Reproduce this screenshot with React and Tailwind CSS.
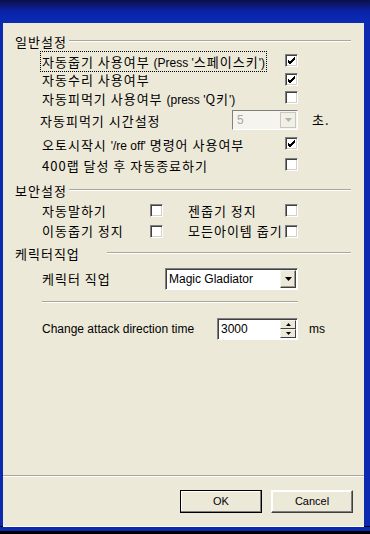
import React from 'react';

const kr = { fontFamily: '"Noto Sans CJK KR", "Noto Sans", sans-serif' };
const lat = { fontFamily: '"Liberation Sans", Arial, sans-serif' };

// korean label text, a bit wider to match the bitmap Gulim of the original
const krText = 'text-[13px] tracking-[1px] text-black whitespace-nowrap';

function L({ children }) {
    return <span style={lat} className="text-[12px] tracking-normal">{children}</span>;
}

function CheckBox({ checked }) {
    return (
        <div className="w-[13px] h-[13px] bg-white border border-t-[#808080] border-l-[#808080] border-r-white border-b-white shadow-[inset_1px_1px_0_#404040,inset_-1px_-1px_0_#d4d0c8] flex items-center justify-center shrink-0">
            {checked && (
                <svg width="9" height="9" viewBox="0 0 9 9">
                    <path d="M1 4 L3 6 L8 1 M1 5 L3 7 L8 2 M1 6 L3 8 L8 3" stroke="#000" strokeWidth="1" fill="none" />
                </svg>
            )}
        </div>
    );
}

function Arrow({ color = '#000' }) {
    return (
        <svg width="7" height="4" viewBox="0 0 7 4">
            <path d="M0 0 H7 L3.5 4 Z" fill={color} />
        </svg>
    );
}

function GroupHeader({ title, lineStart }) {
    return (
        <div className="flex items-center h-[20px] pl-[12px] pr-[13px]">
            <span style={kr} className={`${krText} leading-none`}>{title}</span>
            <div className={`flex-1 h-[2px] border-t border-t-[#aca899] border-b border-b-white ${lineStart}`} />
        </div>
    );
}

function Row({ height, children }) {
    return <div className="flex items-center" style={{ height }}>{children}</div>;
}

function OptionRow({ height, children, checked, focused }) {
    return (
        <Row height={height}>
            <div className="w-[243px] pl-[38px]">
                <span style={kr} className={`${krText} leading-[14px] px-[1px] ${focused ? 'outline outline-1 outline-dotted outline-black' : ''}`}>
                    {children}
                </span>
            </div>
            <div className="pl-[39px]">
                <CheckBox checked={checked} />
            </div>
        </Row>
    );
}

function RaisedButton({ label, isDefault }) {
    return (
        <button
            style={lat}
            className={`w-[82px] h-[23px] bg-[#ece9d8] text-[11px] text-black border ${isDefault ? 'border-black' : 'border-t-white border-l-white border-r-[#404040] border-b-[#404040]'} shadow-[inset_-1px_-1px_0_#808080,inset_1px_1px_0_#ffffff]`}
        >
            {label}
        </button>
    );
}

function ScrollBtn() {
    return (
        <div className="w-[16px] self-stretch bg-[#ece9d8] border border-t-[#f4f4f0] border-l-[#f4f4f0] border-r-[#404040] border-b-[#404040] shadow-[inset_-1px_-1px_0_#9c9a8e] flex items-center justify-center">
            <Arrow />
        </div>
    );
}

export default function App() {
    return (
        <div className="w-[370px] h-[534px] bg-black flex flex-col">
            {/* title bar */}
            <div className="h-[23px] shrink-0 bg-gradient-to-b from-[#0a0f4a] via-[#0a23a8] to-[#0a2bb5]" />

            <div className="flex flex-1 min-h-0">
                <div className="w-[3px] bg-[#0b2ab0]" />

                <div className="flex-1 bg-[#ece9d8] flex flex-col pt-[8px]">
                    <GroupHeader title="일반설정" lineStart="ml-[2px]" />

                    <OptionRow height={19} checked focused>
                        자동줍기 사용여부 <L>(Press '</L>스페이스키<L>')</L>
                    </OptionRow>
                    <OptionRow height={18} checked>자동수리 사용여부</OptionRow>
                    <OptionRow height={19}>
                        자동피먹기 사용여부 <L>(press '</L>Q키<L>')</L>
                    </OptionRow>

                    <Row height={25}>
                        <div className="w-[229px] pl-[37px]">
                            <span style={kr} className={krText}>자동피먹기 시간설정</span>
                        </div>
                        <div className="w-[66px] h-[20px] bg-[#f5f4ee] border border-t-[#808080] border-l-[#808080] border-r-white border-b-white flex items-stretch p-[1px]">
                            <span style={lat} className="flex-1 text-[12px] text-[#a8a8a8] pl-[3px] leading-[16px]">5</span>
                            <div className="w-[16px] border border-[#c9c7ba] bg-[#f0efe8] flex items-center justify-center">
                                <Arrow color="#b5b3a8" />
                            </div>
                        </div>
                        <span style={kr} className={`ml-[14px] ${krText}`}>초.</span>
                    </Row>

                    <OptionRow height={23} checked>
                        오토시작시 <L>'/re off'</L> 명령어 사용여부
                    </OptionRow>
                    <OptionRow height={19}>400랩 달성 후 자동종료하기</OptionRow>

                    <div className="h-[6px]" />
                    <GroupHeader title="보안설정" lineStart="ml-[2px]" />

                    <Row height={21}>
                        <span style={kr} className={`w-[147px] pl-[39px] ${krText}`}>자동말하기</span>
                        <CheckBox />
                        <span style={kr} className={`w-[122px] pl-[25px] ${krText}`}>젠줍기 정지</span>
                        <CheckBox />
                    </Row>
                    <Row height={20}>
                        <span style={kr} className={`w-[147px] pl-[39px] ${krText}`}>이동줍기 정지</span>
                        <CheckBox />
                        <span style={kr} className={`w-[122px] pl-[25px] ${krText}`}>모든아이템 줍기</span>
                        <CheckBox />
                    </Row>

                    <div className="h-[2px]" />
                    <GroupHeader title="케릭터직업" lineStart="ml-[27px]" />

                    <Row height={32}>
                        <span style={kr} className={`w-[162px] pl-[39px] ${krText}`}>케릭터 직업</span>
                        <div className="w-[133px] h-[22px] bg-white border border-t-[#808080] border-l-[#808080] border-r-white border-b-white shadow-[inset_1px_1px_0_#404040] flex items-stretch p-[1px] pl-[2px]">
                            <span style={lat} className="flex-1 text-[12px] text-black leading-[18px] pl-[1px]">Magic Gladiator</span>
                            <ScrollBtn />
                        </div>
                    </Row>

                    <div className="h-[14px] flex items-center pl-[39px] pr-[66px]">
                        <div className="flex-1 h-[2px] border-t border-t-[#aca899] border-b border-b-white" />
                    </div>

                    <div className="h-[9px]" />
                    <Row height={22}>
                        <span style={lat} className="w-[214px] pl-[39px] text-[12px] text-black">Change attack direction time</span>
                        <div className="w-[81px] h-[22px] bg-white border border-t-[#808080] border-l-[#808080] border-r-white border-b-white shadow-[inset_1px_1px_0_#404040] flex items-stretch p-[1px]">
                            <span style={lat} className="flex-1 text-[12px] text-black leading-[18px] pl-[2px]">3000</span>
                            <div className="w-[16px] flex flex-col">
                                <div className="flex-1 bg-[#ece9d8] border border-t-[#f4f4f0] border-l-[#f4f4f0] border-r-[#404040] border-b-[#404040] flex items-center justify-center">
                                    <svg width="5" height="3" viewBox="0 0 5 3"><path d="M0 3 H5 L2.5 0 Z" fill="#000" /></svg>
                                </div>
                                <div className="flex-1 bg-[#ece9d8] border border-t-[#f4f4f0] border-l-[#f4f4f0] border-r-[#404040] border-b-[#404040] flex items-center justify-center">
                                    <svg width="5" height="3" viewBox="0 0 5 3"><path d="M0 0 H5 L2.5 3 Z" fill="#000" /></svg>
                                </div>
                            </div>
                        </div>
                        <span style={lat} className="ml-[11px] text-[12px] text-black">ms</span>
                    </Row>

                    <div className="flex-1" />

                    <div className="h-[2px] border-t border-t-[#aca899] border-b border-b-white" />

                    <div className="flex justify-end gap-[9px] pt-[13px] pb-[13px] pr-[11px]">
                        <RaisedButton label="OK" isDefault />
                        <RaisedButton label="Cancel" />
                    </div>
                </div>

                <div className="w-[6px] bg-[#0b2ab0]" />
            </div>

            <div className="h-[1px] shrink-0 bg-white ml-[3px] mr-[6px]" />
            <div className="h-[4px] shrink-0 bg-[#0b2ab0]" />
            <div className="h-[3px] shrink-0 bg-black" />
        </div>
    );
}
